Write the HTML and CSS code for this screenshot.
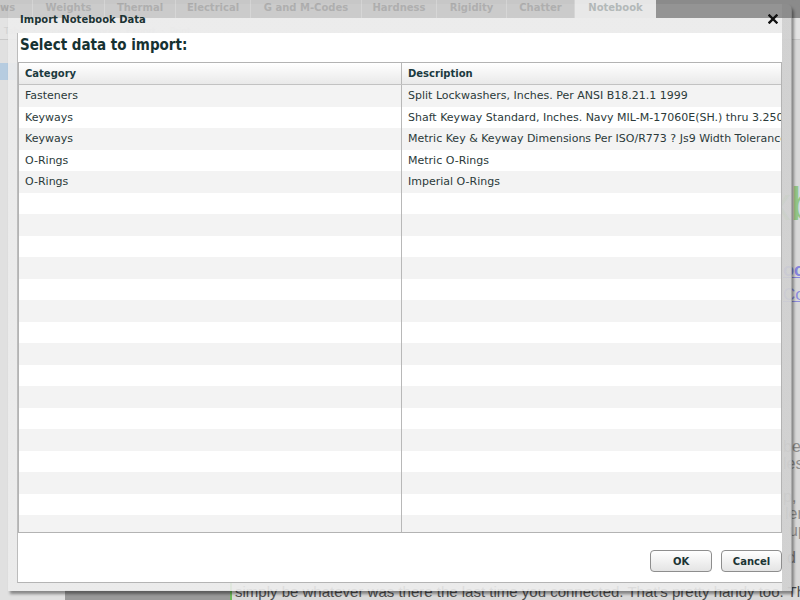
FILE: index.html
```html
<!DOCTYPE html>
<html>
<head>
<meta charset="utf-8">
<title>Import Notebook Data</title>
<link rel="stylesheet" href="styles.css">
</head>
<body>
<div class="page">
  <div class="tabs">
    <div class="tab tab-first">ws</div>
    <div class="tab tab-weights">Weights</div>
    <div class="tab tab-thermal">Thermal</div>
    <div class="tab tab-electrical">Electrical</div>
    <div class="tab tab-gm">G and M-Codes</div>
    <div class="tab tab-hardness">Hardness</div>
    <div class="tab tab-rigidity">Rigidity</div>
    <div class="tab tab-chatter">Chatter</div>
    <div class="tab tab-notebook active">Notebook</div>
    <div class="tab-rest"></div>
  </div>
  <div class="subbar">Table &nbsp;·&nbsp; Notes &nbsp;·&nbsp; Import &nbsp;·&nbsp; Export &nbsp;·&nbsp; Print</div>
  <div class="page-body">
    <div class="leftnav">
      <div class="nav-item active"></div>
      <div class="nav-foot"></div>
    </div>
    <div class="content">
      <div class="frag frag-green">xb</div>
      <div class="frag frag-link1">oo</div>
      <div class="frag frag-link2">Co</div>
      <div class="frag frag-gray frag-be">be</div>
      <div class="frag frag-gray">les</div>
      <div class="frag frag-gray frag-p">p,</div>
      <div class="frag frag-gray frag-ler">ler</div>
      <div class="frag frag-gray frag-up">up</div>
      <div class="frag frag-gray frag-dto">d to</div>
      <div class="bottom-line">simply be whatever was there the last time you connected. That's pretty handy too. Th</div>
    </div>
  </div>
</div>

<div class="dialog">
  <div class="dialog-title">
    <span>Import Notebook Data</span>
    <svg class="close" width="10" height="10" viewBox="0 0 10 10"><path d="M1.5 1.5 L8.5 8.5 M8.5 1.5 L1.5 8.5" stroke="#111" stroke-width="2.4" stroke-linecap="square"/></svg>
  </div>
  <div class="panel">
    <h2 class="heading">Select data to import:</h2>
    <div class="grid">
      <div class="grid-head">
        <div class="cell col-cat">Category</div>
        <div class="cell col-desc">Description</div>
      </div>
      <div class="grid-body">
        <div class="row"><div class="cell col-cat">Fasteners</div><div class="cell col-desc">Split Lockwashers, Inches. Per ANSI B18.21.1 1999</div></div>
        <div class="row"><div class="cell col-cat">Keyways</div><div class="cell col-desc">Shaft Keyway Standard, Inches. Navy MIL-M-17060E(SH.) thru 3.250</div></div>
        <div class="row"><div class="cell col-cat">Keyways</div><div class="cell col-desc">Metric Key &amp; Keyway Dimensions Per ISO/R773 ? Js9 Width Tolerance</div></div>
        <div class="row"><div class="cell col-cat">O-Rings</div><div class="cell col-desc">Metric O-Rings</div></div>
        <div class="row"><div class="cell col-cat">O-Rings</div><div class="cell col-desc">Imperial O-Rings</div></div>
        <div class="row"><div class="cell col-cat"></div><div class="cell col-desc"></div></div>
        <div class="row"><div class="cell col-cat"></div><div class="cell col-desc"></div></div>
        <div class="row"><div class="cell col-cat"></div><div class="cell col-desc"></div></div>
        <div class="row"><div class="cell col-cat"></div><div class="cell col-desc"></div></div>
        <div class="row"><div class="cell col-cat"></div><div class="cell col-desc"></div></div>
        <div class="row"><div class="cell col-cat"></div><div class="cell col-desc"></div></div>
        <div class="row"><div class="cell col-cat"></div><div class="cell col-desc"></div></div>
        <div class="row"><div class="cell col-cat"></div><div class="cell col-desc"></div></div>
        <div class="row"><div class="cell col-cat"></div><div class="cell col-desc"></div></div>
        <div class="row"><div class="cell col-cat"></div><div class="cell col-desc"></div></div>
        <div class="row"><div class="cell col-cat"></div><div class="cell col-desc"></div></div>
        <div class="row"><div class="cell col-cat"></div><div class="cell col-desc"></div></div>
        <div class="row"><div class="cell col-cat"></div><div class="cell col-desc"></div></div>
        <div class="row"><div class="cell col-cat"></div><div class="cell col-desc"></div></div>
        <div class="row"><div class="cell col-cat"></div><div class="cell col-desc"></div></div>
        <div class="row"><div class="cell col-cat"></div><div class="cell col-desc"></div></div>
      </div>
    </div>
    <div class="footer">
      <button class="btn">OK</button>
      <button class="btn">Cancel</button>
    </div>
  </div>
</div>
</body>
</html>
```
FILE: styles.css
```css
* { box-sizing: border-box; }
html, body {
  margin: 0;
  padding: 0;
  width: 800px;
  height: 600px;
  overflow: hidden;
}
body {
  font-family: "DejaVu Sans", Verdana, sans-serif;
  font-size: 11px;
  background: #d8d8d8;
  position: relative;
}

/* ---------- background page (dimmed) ---------- */
.page {
  width: 800px;
  height: 600px;
  display: flex;
  flex-direction: column;
}
.tabs {
  display: flex;
  height: 18px;
  flex: none;
  background: #8b8b8b;
}
.tab {
  height: 18px;
  background: #c7c7c7;
  border-right: 1px solid #d3d3d3;
  color: #a9a9a9;
  font-weight: bold;
  font-size: 10px;
  line-height: 16px;
  text-align: center;
  white-space: nowrap;
  overflow: hidden;
}
.tab-first { width: 33px; text-align: right; padding-right: 17px; }
.tab-weights { width: 72px; }
.tab-thermal { width: 71px; }
.tab-electrical { width: 75px; }
.tab-gm { width: 111px; }
.tab-hardness { width: 75px; }
.tab-rigidity { width: 70px; }
.tab-chatter { width: 68px; }
.tab-notebook { width: 81px; }
.tab.active { background: #e6e6e6; color: #adb3b3; border-right: none; }
.tab-rest { flex: 1; background: #8b8b8b; border-top-right-radius: 8px; }

.subbar {
  height: 22px;
  flex: none;
  background: #e3e3e3;
  border-bottom: 1px solid #c9c9c9;
  color: #d2d2d2;
  font-size: 9px;
  line-height: 26px;
  padding-left: 4px;
  white-space: nowrap;
}
.page-body {
  flex: 1;
  display: flex;
}
.leftnav {
  width: 230px;
  flex: none;
  background: #e0e0e0;
  display: flex;
  flex-direction: column;
}
.nav-item.active {
  height: 17px;
  margin-top: 23px;
  background: #b6cce0;
}
.nav-foot {
  margin-top: auto;
  margin-left: 65px;
  height: 10px;
  background: #9a9a9a;
}
.content {
  flex: 1;
  border-left: 2px solid #6fbb5c;
  padding-left: 3px;
  background: #d9d9d9;
  display: flex;
  flex-direction: column;
  font-family: "Liberation Sans", Arial, sans-serif;
  white-space: nowrap;
  overflow: hidden;
}
.frag { padding-left: 548px; }
.frag-green {
  margin-top: 139px;
  padding-left: 533px;
  font-size: 46px;
  line-height: 50px;
  color: #93c686;
}
.frag-link1 {
  margin-top: 31px;
  font-size: 18px;
  font-weight: bold;
  line-height: 20px;
  color: #8585dd;
  text-decoration: underline;
}
.frag-link2 {
  margin-top: 5px;
  font-size: 17px;
  line-height: 20px;
  color: #8c8cde;
  text-decoration: underline;
}
.frag-gray {
  font-size: 16px;
  line-height: 17px;
  color: #8e8e8e;
}
.frag-be { margin-top: 133px; }
.frag-p { margin-top: 16px; }
.frag-ler { padding-left: 550px; }
.frag-up { padding-left: 554px; }
.frag-dto { margin-top: 10px; padding-left: 552px; color: #7a7a7a; }
.bottom-line {
  margin-top: auto;
  height: 17px;
  font-size: 15px;
  line-height: 17px;
  color: #4e4e4e;
}

/* ---------- dialog ---------- */
.dialog {
  position: absolute;
  left: 8px;
  top: 4px;
  width: 784px;
  height: 587px;
  border-top-right-radius: 6px;
  background:
    linear-gradient(to right, transparent 774px, rgba(120,120,120,0.22) 774px, rgba(120,120,120,0.22) 783px, rgba(110,110,110,0.5) 783px),
    linear-gradient(to bottom, rgba(255,255,255,0.08) 0, rgba(255,255,255,0.08) 14px, rgba(236,236,236,0.9) 14px);
  box-shadow: 2px 3px 3px rgba(0,0,0,0.4);
  display: flex;
  flex-direction: column;
}
.dialog-title {
  height: 29px;
  flex: none;
  display: flex;
  justify-content: space-between;
  align-items: flex-start;
  padding: 10px 14px 0 12px;
  font-weight: bold;
  font-size: 10px;
  line-height: 12px;
  color: #1c3434;
}
.close { margin-top: 0; }
.panel {
  margin-left: 9px;
  width: 765px;
  height: 550px;
  background: #fff;
  border-left: 1px solid #bcbcbc;
  border-bottom: 1px solid #b4b4b4;
  display: flex;
  flex-direction: column;
}
.heading {
  margin: 0;
  height: 29px;
  flex: none;
  padding: 2px 0 0 2px;
  font-family: "DejaVu Sans Condensed", "DejaVu Sans", sans-serif;
  font-weight: bold;
  font-size: 15px;
  line-height: 20px;
  color: #163232;
}
.grid {
  width: 764px;
  height: 471px;
  flex: none;
  border: 1px solid #b3b3b3;
  display: flex;
  flex-direction: column;
  overflow: hidden;
}
.grid-head {
  display: flex;
  height: 22px;
  flex: none;
  background: linear-gradient(to bottom, #ffffff, #e9e9e9);
  border-bottom: 1px solid #c2c2c2;
  font-weight: bold;
  font-size: 10px;
  color: #1b3a3f;
  line-height: 21px;
}
.grid-body {
  flex: 1;
  overflow: hidden;
  display: flex;
  flex-direction: column;
}
.row {
  display: flex;
  height: 21.5px;
  flex: none;
  line-height: 21.5px;
  color: #2b3a3a;
}
.row:nth-child(odd) { background: #f3f3f3; }
.cell {
  white-space: nowrap;
  overflow: hidden;
}
.col-cat { width: 382px; padding-left: 6px; flex: none; }
.col-desc { flex: 1; padding-left: 6px; border-left: 1px solid #b8b8b8; }

.footer {
  flex: 1;
  display: flex;
  justify-content: flex-end;
  align-items: flex-start;
  gap: 9px;
  padding: 17px 0 0 0;
}
.btn {
  height: 22px;
  border: 1px solid #8e8e8e;
  border-radius: 4px;
  background: linear-gradient(to bottom, #ffffff, #e4e4e4);
  font-family: "DejaVu Sans", Verdana, sans-serif;
  font-weight: bold;
  font-size: 10px;
  color: #1b3434;
  padding: 0;
  width: 62px;
}
.btn + .btn { width: 61px; }
```
